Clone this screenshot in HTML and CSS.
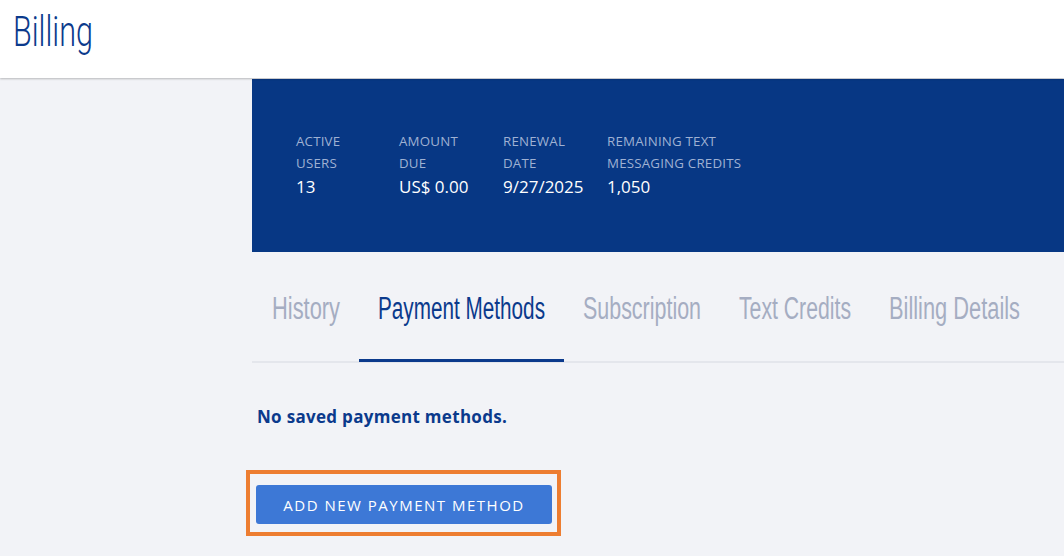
FILE: index.html
```html
<!DOCTYPE html>
<html lang="en">
<head>
<meta charset="utf-8">
<title>Billing</title>
<link rel="stylesheet" href="styles.css">
</head>
<body>
<header class="topbar">
  <h1 class="page-title">
    <svg class="title-svg" width="84" height="56" viewBox="0 0 84 56"><text x="1" y="36" textLength="80" lengthAdjust="spacingAndGlyphs">Billing</text></svg>
  </h1>
</header>
<main class="main">
  <section class="summary">
    <div class="stat">
      <div class="stat-label">Active<br>users</div>
      <div class="stat-value">13</div>
    </div>
    <div class="stat">
      <div class="stat-label">Amount<br>due</div>
      <div class="stat-value">US$ 0.00</div>
    </div>
    <div class="stat">
      <div class="stat-label">Renewal<br>date</div>
      <div class="stat-value">9/27/2025</div>
    </div>
    <div class="stat">
      <div class="stat-label">Remaining text<br>messaging credits</div>
      <div class="stat-value">1,050</div>
    </div>
  </section>
  <nav class="tabs">
    <a class="tab"><svg class="tab-svg" width="68" height="40" viewBox="0 0 68 40"><text x="0" y="21.28" transform="scale(1 1.41)" textLength="68" lengthAdjust="spacingAndGlyphs">History</text></svg></a>
    <a class="tab tab-active"><svg class="tab-svg" width="167" height="40" viewBox="0 0 167 40"><text x="0" y="21.28" transform="scale(1 1.41)" textLength="167" lengthAdjust="spacingAndGlyphs">Payment Methods</text></svg></a>
    <a class="tab"><svg class="tab-svg" width="118" height="40" viewBox="0 0 118 40"><text x="0" y="21.28" transform="scale(1 1.41)" textLength="118" lengthAdjust="spacingAndGlyphs">Subscription</text></svg></a>
    <a class="tab"><svg class="tab-svg" width="112" height="40" viewBox="0 0 112 40"><text x="0" y="21.28" transform="scale(1 1.41)" textLength="112" lengthAdjust="spacingAndGlyphs">Text Credits</text></svg></a>
    <a class="tab"><svg class="tab-svg" width="131" height="40" viewBox="0 0 131 40"><text x="0" y="21.28" transform="scale(1 1.41)" textLength="131" lengthAdjust="spacingAndGlyphs">Billing Details</text></svg></a>
  </nav>
  <section class="panel">
    <p class="empty">No saved payment methods.</p>
    <div class="highlight">
      <button class="btn-primary">Add new payment method</button>
    </div>
  </section>
</main>
</body>
</html>
```
FILE: styles.css
```css
* { box-sizing: border-box; }
html, body { margin: 0; padding: 0; }
body {
  background: #f2f3f7;
  font-family: "Open Sans", "Noto Sans", sans-serif;
  width: 1064px;
  height: 556px;
  overflow: hidden;
}
.topbar {
  height: 78px;
  background: #ffffff;
  box-shadow: 0 1px 2px rgba(0,0,0,0.25);
  position: relative;
  z-index: 1;
  padding: 10px 0 0 12px;
}
.page-title {
  margin: 0;
  line-height: 0;
}
.title-svg { display: block; overflow: visible; }
.title-svg text {
  font-family: Roboto, "Liberation Sans", sans-serif;
  font-weight: 300;
  font-size: 43px;
  fill: #0b3a8c;
}
.main {
  margin-left: 252px;
  margin-top: 1px;
}
.summary {
  height: 173px;
  background: #073784;
  display: flex;
  padding: 51px 0 0 44px;
}
.stat { width: 104px; }
.stat:first-child { width: 103px; }
.stat:last-child { width: auto; }
.stat-label {
  font-size: 13.3px;
  line-height: 22px;
  text-transform: uppercase;
  color: #9fb1d3;
  letter-spacing: 0.2px;
}
.stat-value {
  font-size: 17px;
  line-height: 26px;
  color: #ffffff;
}
.tabs {
  display: flex;
  align-items: flex-start;
  height: 111px;
  border-bottom: 2px solid #e4e6ec;
  padding-left: 1px;
}
.tab {
  display: block;
  height: 110px;
  padding: 37px 19px 0;
}
.tab-svg { display: block; overflow: visible; }
.tab-svg text {
  font-family: "Liberation Sans", Arial, sans-serif;
  font-size: 22px;
  fill: #a5adc2;
}
.tab-active { border-bottom: 3px solid #0b3a8c; }
.tab-active .tab-svg text { fill: #0b3a8c; }
.panel {
  padding: 42px 0 0 5px;
}
.empty {
  margin: 0;
  font-size: 17px;
  font-weight: 700;
  line-height: 24px;
  letter-spacing: 0.3px;
  color: #0b3a8c;
}
.highlight {
  display: inline-block;
  margin: 41px 0 0 -11px;
  border: 4px solid #ed7d31;
  padding: 11px 5px 8px 6px;
}
.btn-primary {
  display: block;
  width: 296px;
  height: 39px;
  border: none;
  border-radius: 3px;
  background: #3d78d6;
  color: #ffffff;
  font-family: "Open Sans", "Noto Sans", sans-serif;
  font-size: 15px;
  letter-spacing: 1.5px;
  text-transform: uppercase;
}
```
